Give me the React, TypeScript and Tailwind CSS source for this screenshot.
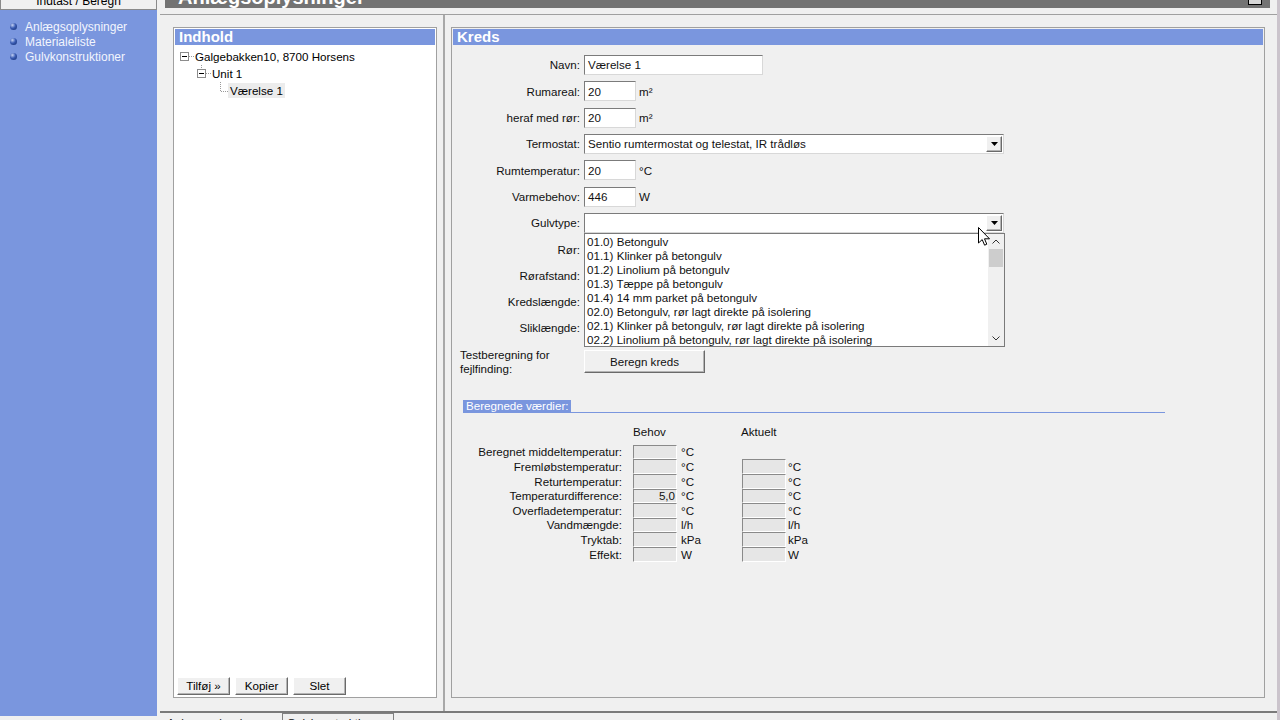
import React from 'react'

const raised =
  'bg-[#f0f0f0] border border-t-white border-l-white border-r-[#6a6a6a] border-b-[#6a6a6a] shadow-[inset_-1px_-1px_0_#b4b4b4]'
const sunken = 'bg-white border border-t-[#7b7b7b] border-l-[#7b7b7b] border-r-[#d8d8d8] border-b-[#d8d8d8]'

function Bullet() {
  return (
    <span className="w-[7px] h-[7px] rounded-full shrink-0 bg-[radial-gradient(circle_at_35%_30%,#c4d2f4_0%,#3a5cb4_45%,#11296a_100%)]" />
  )
}

function Caret() {
  return (
    <svg width="7" height="4" viewBox="0 0 7 4">
      <path d="M0 0 H7 L3.5 4 Z" fill="#000" />
    </svg>
  )
}

function Select({ value }: { value: string }) {
  return (
    <div className={`${sunken} w-[420px] h-[20px] flex items-center pl-[3px] pr-[1px]`}>
      <span className="flex-1 truncate">{value}</span>
      <span className={`${raised} w-[16px] h-[16px] flex items-center justify-center`}>
        <Caret />
      </span>
    </div>
  )
}

function Input({ value, w }: { value: string; w: string }) {
  return <div className={`${sunken} ${w} h-[20px] flex items-center pl-[3px]`}>{value}</div>
}

const floorTypes = [
  '01.0) Betongulv',
  '01.1) Klinker på betongulv',
  '01.2) Linolium på betongulv',
  '01.3) Tæppe på betongulv',
  '01.4) 14 mm parket på betongulv',
  '02.0) Betongulv, rør lagt direkte på isolering',
  '02.1) Klinker på betongulv, rør lagt direkte på isolering',
  '02.2) Linolium på betongulv, rør lagt direkte på isolering',
]

const results: { label: string; unit: string; value?: string; actual: boolean }[] = [
  { label: 'Beregnet middeltemperatur:', unit: '°C', actual: false },
  { label: 'Fremløbstemperatur:', unit: '°C', actual: true },
  { label: 'Returtemperatur:', unit: '°C', actual: true },
  { label: 'Temperaturdifference:', unit: '°C', value: '5,0', actual: true },
  { label: 'Overfladetemperatur:', unit: '°C', actual: true },
  { label: 'Vandmængde:', unit: 'l/h', actual: true },
  { label: 'Tryktab:', unit: 'kPa', actual: true },
  { label: 'Effekt:', unit: 'W', actual: true },
]

function ValueBox({ value }: { value?: string }) {
  return (
    <div className="w-[44px] h-full bg-[#e6e6e6] border border-t-[#8a8a8a] border-l-[#8a8a8a] border-r-white border-b-white flex items-center justify-end pr-[1px] leading-none">
      {value}
    </div>
  )
}

function FormRow({ label, children }: { label: string; children?: React.ReactNode }) {
  return (
    <div className="flex items-center h-[26.3px]">
      <div className="w-[132px] text-right pr-[4px] shrink-0">{label}</div>
      <div className="flex items-center">{children}</div>
    </div>
  )
}

function Tree() {
  return (
    <div className="pt-[3px] text-[11.6px] text-black">
      <div className="flex items-center h-[17px] pl-[6px]">
        <svg width="15" height="17" viewBox="0 0 15 17" className="shrink-0">
          <rect x="0.5" y="4.5" width="8" height="8" fill="#fff" stroke="#8c8c8c" />
          <path d="M2 8.5 H7" stroke="#000" />
          <path d="M9 8.5 H15" stroke="#9a9a9a" strokeDasharray="1 1" />
        </svg>
        <span>Galgebakken10, 8700 Horsens</span>
      </div>
      <div className="flex items-center h-[17px] pl-[23px]">
        <svg width="15" height="17" viewBox="0 0 15 17" className="shrink-0">
          <path d="M4.5 0 V4" stroke="#9a9a9a" strokeDasharray="1 1" />
          <rect x="0.5" y="4.5" width="8" height="8" fill="#fff" stroke="#8c8c8c" />
          <path d="M2 8.5 H7" stroke="#000" />
          <path d="M9 8.5 H15" stroke="#9a9a9a" strokeDasharray="1 1" />
        </svg>
        <span>Unit 1</span>
      </div>
      <div className="flex items-center h-[17px] pl-[41px]">
        <svg width="13" height="17" viewBox="0 0 13 17" className="shrink-0">
          <path d="M5.5 0 V9.5 H13" stroke="#9a9a9a" strokeDasharray="1 1" fill="none" />
        </svg>
        <span className="bg-[#ececec] px-[2px] leading-[15px] whitespace-nowrap">Værelse 1</span>
      </div>
    </div>
  )
}

export default function App() {
  return (
    <div className="w-[1280px] h-[720px] overflow-hidden bg-[#f0f0f0] flex font-['Liberation_Sans',Arial,sans-serif] relative">
      {/* sidebar */}
      <div className="w-[157px] flex flex-col shrink-0">
        <div className="h-[10px] overflow-hidden bg-[#f0f0f0] border-x border-b border-[#8a8a8a] text-center">
          <div className="mt-[-5px] text-[12px] leading-[12px] text-black">Indtast / Beregn</div>
        </div>
        <div className="flex-1 bg-[#7a96de] pt-[9px] pl-[10px] flex flex-col">
          {['Anlægsoplysninger', 'Materialeliste', 'Gulvkonstruktioner'].map(t => (
            <div key={t} className="flex items-center gap-[8px] h-[15px] text-[12px] text-[#f2f5fd]">
              <Bullet />
              {t}
            </div>
          ))}
        </div>
        <div className="h-[4px]" />
      </div>

      {/* main */}
      <div className="flex-1 flex flex-col ml-[3px]">
        <div className="h-[8px] ml-[5px] mr-[7px] bg-[#737373] overflow-hidden flex justify-between shrink-0">
          <div className="mt-[-13px] ml-[13px] text-[20px] leading-[20px] font-bold text-white">Anlægsoplysninger</div>
          <div className="w-[14px] h-[6px] border border-black bg-[#d8d8d8] mr-[8px] mt-[-1px]" />
        </div>
        <div className="h-[6px] shrink-0" />
        <div className="border-t border-[#a0a0a0] shrink-0" />

        <div className="flex-1 flex min-h-0">
          {/* left panel */}
          <div className="w-[283px] pt-[12px] pl-[13px] pr-[6px] pb-[13px] shrink-0">
            <div className="h-full border border-[#a0a0a0] bg-white flex flex-col">
              <div className="h-[16px] bg-[#7a96de] mx-px mt-px pl-[4px] flex items-center text-[15px] font-bold text-white">
                Indhold
              </div>
              <Tree />
              <div className="flex-1" />
              <div className="flex gap-[5px] pl-[3px] pb-[2px] text-[11.6px]">
                {['Tilføj »', 'Kopier', 'Slet'].map(b => (
                  <div key={b} className={`${raised} w-[53px] h-[18px] flex items-center justify-center`}>
                    {b}
                  </div>
                ))}
              </div>
            </div>
          </div>

          {/* splitter */}
          <div className="w-[4px] border-l-2 border-[#a8a8a8] shrink-0" />

          {/* right panel */}
          <div className="flex-1 pt-[12px] pl-[4px] pr-[12px] pb-[13px] min-w-0">
            <div className="h-full border border-[#a0a0a0] bg-[#f0f0f0] flex flex-col text-[11.6px] text-[#111]">
              <div className="h-[16px] bg-[#7a96de] mx-px mt-px pl-[4px] flex items-center text-[15px] font-bold text-white">
                Kreds
              </div>
              <div className="pt-[7px]">
                <FormRow label="Navn:">
                  <Input value="Værelse 1" w="w-[179px]" />
                </FormRow>
                <FormRow label="Rumareal:">
                  <Input value="20" w="w-[52px]" />
                  <span className="ml-[3px]">m²</span>
                </FormRow>
                <FormRow label="heraf med rør:">
                  <Input value="20" w="w-[52px]" />
                  <span className="ml-[3px]">m²</span>
                </FormRow>
                <FormRow label="Termostat:">
                  <Select value="Sentio rumtermostat og telestat, IR trådløs" />
                </FormRow>
                <FormRow label="Rumtemperatur:">
                  <Input value="20" w="w-[52px]" />
                  <span className="ml-[3px]">°C</span>
                </FormRow>
                <FormRow label="Varmebehov:">
                  <Input value="446" w="w-[52px]" />
                  <span className="ml-[3px]">W</span>
                </FormRow>
                <FormRow label="Gulvtype:">
                  <div className="relative">
                    <Select value="" />
                    <div className="absolute left-0 top-[20px] w-[421px] h-[114px] bg-white border border-[#7a7a7a] flex z-10">
                      <div className="flex-1 pt-[1px] pl-[2px]">
                        {floorTypes.map(f => (
                          <div key={f} className="h-[14px] leading-[14px] whitespace-nowrap">
                            {f}
                          </div>
                        ))}
                      </div>
                      <div className="w-[16px] bg-[#f0f0f0] flex flex-col items-center">
                        <div className="h-[15px] flex items-center justify-center">
                          <svg width="8" height="5" viewBox="0 0 8 5">
                            <path d="M0.5 4.5 L4 1 L7.5 4.5" stroke="#333" fill="none" />
                          </svg>
                        </div>
                        <div className="w-[14px] h-[18px] bg-[#cdcdcd]" />
                        <div className="flex-1" />
                        <div className="h-[15px] flex items-center justify-center">
                          <svg width="8" height="5" viewBox="0 0 8 5">
                            <path d="M0.5 0.5 L4 4 L7.5 0.5" stroke="#333" fill="none" />
                          </svg>
                        </div>
                      </div>
                    </div>
                  </div>
                </FormRow>
                <FormRow label="Rør:" />
                <FormRow label="Rørafstand:" />
                <FormRow label="Kredslængde:" />
                <FormRow label="Sliklængde:" />
              </div>

              <div className="flex mt-[7px]">
                <div className="w-[132px] pl-[8px] leading-[14px] shrink-0">
                  Testberegning for
                  <br />
                  fejlfinding:
                </div>
                <div className={`${raised} mt-[2px] w-[121px] h-[23px] flex items-center justify-center`}>
                  Beregn kreds
                </div>
              </div>

              <div className="mt-[24px] ml-[11px] w-[702px] h-[13px] border-b border-[#7a96de] flex">
                <div className="bg-[#7a96de] text-white px-[3px] leading-[12px]">Beregnede værdier:</div>
              </div>

              <div className="mt-[11px] flex h-[15px] items-center">
                <div className="w-[181px]" />
                <div className="w-[108px]">Behov</div>
                <div>Aktuelt</div>
              </div>

              <div className="mt-[5.5px]">
                {results.map(r => (
                  <div key={r.label} className="flex items-center h-[14.6px]">
                    <div className="w-[170px] text-right shrink-0">{r.label}</div>
                    <div className="w-[11px]" />
                    <ValueBox value={r.value} />
                    <div className="w-[65px] pl-[4px]">{r.unit}</div>
                    {r.actual ? <ValueBox /> : <div className="w-[44px]" />}
                    {r.actual && <div className="pl-[2px]">{r.unit}</div>}
                  </div>
                ))}
              </div>
            </div>
          </div>
        </div>

        {/* bottom tabs */}
        <div className="h-[9px] shrink-0 border-t-2 border-[#7a7a7a] flex overflow-hidden text-[11.6px] leading-[12px]">
          <div className="w-[122px] pl-[7px] pt-[4px] text-[#222]">Anlægsoplysninger</div>
          <div className="w-[112px] border-x border-t border-[#808080] pl-[4px] pt-[3px] text-[#111]">Gulvkonstruktioner</div>
        </div>
      </div>

      {/* right edge */}
      <div className="w-[3px] bg-[#cbc4cc] shrink-0" />

      {/* mouse cursor */}
      <svg className="absolute left-[978px] top-[227px] z-20" width="13" height="20" viewBox="0 0 13 20">
        <path d="M0.5 0.5 V16 L4.2 12.6 L6.6 18.2 L8.8 17.2 L6.5 11.8 H11.5 Z" fill="#fff" stroke="#000" />
      </svg>
    </div>
  )
}
